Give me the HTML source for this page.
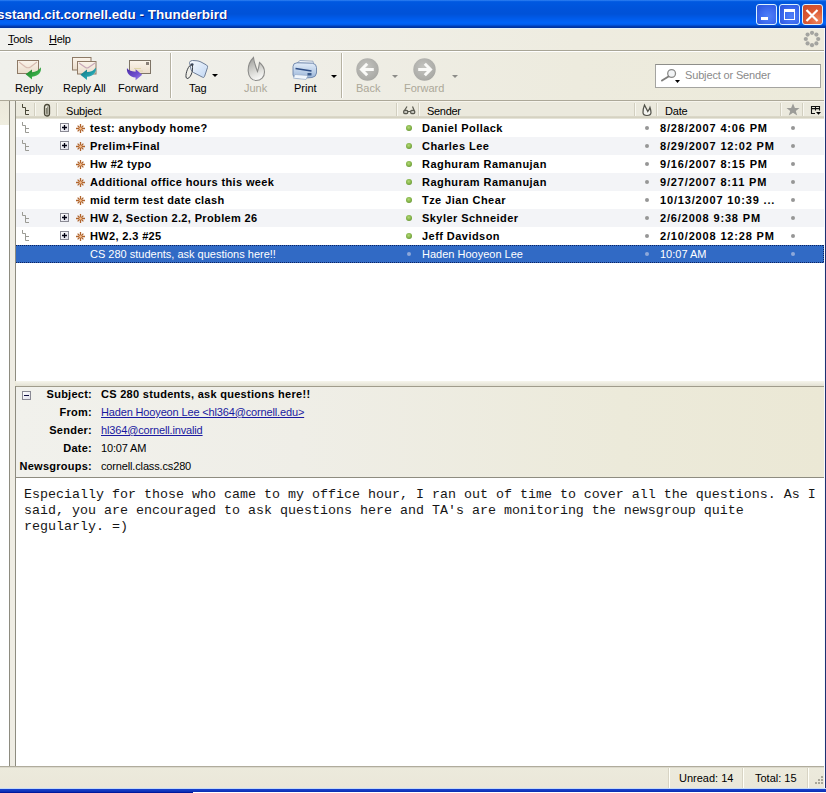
<!DOCTYPE html>
<html><head><meta charset="utf-8">
<style>
html,body{margin:0;padding:0;}
body{width:826px;height:793px;overflow:hidden;position:relative;background:#ECE9D8;font-family:"Liberation Sans",sans-serif;font-size:11px;color:#000;}
.a{position:absolute;}
.t{position:absolute;white-space:pre;line-height:13px;}
.b{font-weight:bold;}
/* title */
#title{left:0;top:0;width:826px;height:28px;background:linear-gradient(to bottom,#3D8BF5 0px,#0A62E6 1px,#0058E0 2px,#0053DA 9px,#0052D8 14px,#005CEC 19px,#0064F8 23px,#0059E6 25px,#0040B8 26px,#00309A 28px);}
#ttext{left:-3px;top:7px;font-size:13.5px;font-weight:bold;color:#fff;line-height:16px;text-shadow:1px 1px 0 #0A1E80;}
.wb{position:absolute;top:4px;width:19px;height:19px;border:1px solid #DCF2FF;border-radius:3px;}
#menubar{left:0;top:28px;width:824px;height:22px;background:linear-gradient(#E4F4FC 0,#E4F4FC 1px,transparent 1px),linear-gradient(to right,#F1F1EE 0%,#F0EFE8 35%,#EEECE0 70%,#EEEBDD 100%);}
#toolbar{left:0;top:52px;width:824px;height:48px;background:linear-gradient(to right,#F0F0EB 0%,#EFEEE7 35%,#EDEBDE 70%,#ECEADA 100%);}
.sep{position:absolute;width:1px;background:#B6B2A2;}
.hdrcol{position:absolute;top:101px;height:18px;}
.row{position:absolute;left:16px;width:808px;height:18px;}
.dot{position:absolute;width:4px;height:4px;border-radius:2px;background:#969696;}
.gdot{position:absolute;width:6px;height:6px;border-radius:3px;background:radial-gradient(circle at 45% 40%,#B4D878 0,#88B84C 45%,#4E7A26 100%);}
.star{position:absolute;}
.lbl{position:absolute;white-space:pre;line-height:13px;font-weight:bold;text-align:right;width:92px;left:0;letter-spacing:0.25px;}
.val{position:absolute;white-space:pre;line-height:13px;left:101px;letter-spacing:-0.15px;}
a,.lnk{color:#1A1AA0;text-decoration:underline;}
#body{left:16px;top:478px;width:808px;height:288px;background:#fff;}
#body pre{margin:0;position:absolute;left:8px;top:9px;font-family:"Liberation Mono",monospace;font-size:13.333px;line-height:16px;color:#161616;}
</style></head><body>

<!-- Title bar -->
<div id="title" class="a">
  <div id="ttext" class="t">sstand.cit.cornell.edu - Thunderbird</div>
  <div class="wb" style="left:756px;background:radial-gradient(circle at 60% 60%,#5080F8 0,#3E6CF0 45%,#2850D8 100%);"><div class="a" style="left:4px;top:12px;width:7px;height:3px;background:#fff;"></div></div>
  <div class="wb" style="left:779px;background:radial-gradient(circle at 60% 60%,#5080F8 0,#3E6CF0 45%,#2850D8 100%);"><div class="a" style="left:4px;top:4px;width:9px;height:7px;border:1px solid #fff;border-top-width:3px;"></div></div>
  <div class="wb" style="left:802px;background:radial-gradient(circle at 75% 80%,#F08860 0,#DC5A34 45%,#C8482A 100%);"><svg class="a" style="left:2px;top:4px" width="14" height="13"><path d="M1.5 1L12.5 12M12.5 1L1.5 12" stroke="#fff" stroke-width="2.2"/></svg></div>
</div>
<div class="a" style="left:824px;top:28px;width:1px;height:760px;background:#F6FAFF;"></div>
<div class="a" style="left:825px;top:28px;width:1px;height:765px;background:#1E3070;"></div>

<!-- Menu bar -->
<div id="menubar" class="a">
  <div class="t" style="left:8px;top:5px;letter-spacing:-0.25px;"><u>T</u>ools</div>
  <div class="t" style="left:49px;top:5px;letter-spacing:-0.25px;"><u>H</u>elp</div>
</div>
<div class="a" style="left:0;top:50px;width:824px;height:1px;background:#A8A596;"></div><div class="a" style="left:0;top:51px;width:824px;height:1px;background:#FFFFFF;"></div>

<!-- Toolbar -->
<div id="toolbar" class="a"></div>
<!-- Reply -->
<svg class="a" style="left:0;top:0" width="0" height="0"><defs>
  <linearGradient id="env" x1="0" y1="0" x2="0" y2="1"><stop offset="0" stop-color="#FBF4EA"/><stop offset="1" stop-color="#EADCCB"/></linearGradient>
  <linearGradient id="grn" x1="0" y1="0" x2="1" y2="1"><stop offset="0" stop-color="#1A7A28"/><stop offset="0.6" stop-color="#34A844"/><stop offset="1" stop-color="#7ADA7A"/></linearGradient>
  <linearGradient id="teal" x1="0" y1="0" x2="1" y2="1"><stop offset="0" stop-color="#0E6A78"/><stop offset="0.6" stop-color="#22A0AC"/><stop offset="1" stop-color="#78D8DC"/></linearGradient>
  <linearGradient id="purp" x1="0" y1="0" x2="1" y2="1"><stop offset="0" stop-color="#4A2CA8"/><stop offset="0.6" stop-color="#7050D0"/><stop offset="1" stop-color="#A890F0"/></linearGradient>
  <linearGradient id="tagg" x1="0" y1="0" x2="1" y2="1"><stop offset="0" stop-color="#F8FBFF"/><stop offset="1" stop-color="#C0D6F2"/></linearGradient>
  <linearGradient id="flm" x1="0.2" y1="0" x2="0.5" y2="1"><stop offset="0" stop-color="#9E9E9A"/><stop offset="0.55" stop-color="#D4D4D0"/><stop offset="1" stop-color="#FAFAF8"/></linearGradient>
  <linearGradient id="prn" x1="0" y1="0" x2="0" y2="1"><stop offset="0" stop-color="#E4EEFA"/><stop offset="1" stop-color="#98B4D8"/></linearGradient>
  <radialGradient id="circ" cx="0.45" cy="0.4" r="0.7"><stop offset="0" stop-color="#C4C4C0"/><stop offset="0.75" stop-color="#ACACA8"/><stop offset="1" stop-color="#A0A09C"/></radialGradient>
</defs></svg>
<svg class="a" style="left:14px;top:56px" width="32" height="26" viewBox="0 0 32 26">
  <rect x="3.5" y="4.5" width="21" height="13" fill="url(#env)" stroke="#8E7A66"/>
  <path d="M5 6L11.5 11Q14 12.5 16.5 11L23 6" fill="none" stroke="#D8BCB0" stroke-width="1.2"/>
  <path d="M11.6 18.2L18 13.6L18 16.2C22 16 25 14.5 26.7 11.3C27.8 15 25.5 20.3 18 20.8L18 23.6Z" fill="url(#grn)"/>
</svg>
<div class="t" style="left:15px;top:82px;">Reply</div>
<!-- Reply All -->
<svg class="a" style="left:68px;top:53px" width="32" height="29" viewBox="0 0 32 29">
  <rect x="4.5" y="4.5" width="18.5" height="12.5" fill="url(#env)" stroke="#8E7A66"/>
  <rect x="9.5" y="8.5" width="18.5" height="12.5" fill="url(#env)" stroke="#8E7A66"/>
  <path d="M11 10L17.5 14.5Q19 15.5 20.5 14.5L27 10" fill="none" stroke="#C8A8B8" stroke-width="1.2"/>
  <path d="M12.4 21.7L19 16.5L19 19C23 19 26 17.5 27.7 14.5C28.8 18.5 26 23.3 19 23.8L19 27Z" fill="url(#teal)"/>
</svg>
<div class="t" style="left:63px;top:82px;">Reply All</div>
<!-- Forward -->
<svg class="a" style="left:122px;top:55px" width="32" height="27" viewBox="0 0 32 27">
  <rect x="7.5" y="5.5" width="21" height="13" fill="url(#env)" stroke="#7E7466"/>
  <rect x="24" y="7" width="3" height="3" fill="#8A8078"/>
  <path d="M12 13.5H19M14 16H21" stroke="#E0D4A8" stroke-width="1"/>
  <path d="M20.2 19.8L13.6 14.3L13.6 16.8C9 16.5 6 15 5 13C4.2 17.5 7.5 22.2 13.6 22.5L13.6 25.2Z" fill="url(#purp)"/>
</svg>
<div class="t" style="left:118px;top:82px;">Forward</div>
<div class="sep" style="left:170px;top:53px;height:45px;"></div>
<div class="a" style="left:171px;top:53px;width:1px;height:45px;background:#FFFFFF;"></div>
<!-- Tag -->
<svg class="a" style="left:182px;top:56px" width="28" height="26" viewBox="0 0 28 26">
  <path d="M7.5 6.5Q8 4.5 10.5 4.5L15 4.8Q17 5 19 6L24.5 9Q26 10 25.5 11.5L22.5 20.5Q22 22 20.5 21.2L11.5 16.5Q10 15.5 9.2 14Z" fill="url(#tagg)" stroke="#6E7E98" stroke-width="1"/>
  <circle cx="10.2" cy="8.6" r="1.4" fill="#3E4E6A"/>
  <path d="M10.2 8.6C6.5 8.5 3.5 17 4 21C4.5 23.5 7 23 9 19C10.5 16 11 12 10.2 8.6" fill="none" stroke="#3A3E44" stroke-width="1"/>
</svg>
<svg class="a" style="left:212px;top:74px" width="6" height="4"><path d="M0 0H6L3 3Z" fill="#000"/></svg>
<div class="t" style="left:189px;top:82px;">Tag</div>
<!-- Junk -->
<svg class="a" style="left:242px;top:55px" width="28" height="28" viewBox="0 0 28 28">
  <path d="M11.5 2.5C7 7 6 12 6.2 16C6.5 22 10 25.5 14 25.5C19 25.5 22.5 22 22.5 17C22.5 13 20.5 10 17.5 7.5C17 11 16.5 14 15.5 16.5C14 12 12 8 11.5 2.5Z" fill="url(#flm)" stroke="#8C8C8A" stroke-width="1.1"/>
</svg>
<div class="t" style="left:244px;top:82px;color:#ACA899;">Junk</div>
<!-- Print -->
<svg class="a" style="left:288px;top:56px" width="34" height="28" viewBox="0 0 34 28">
  <path d="M9 7L12 4.5L25 5.2L25.5 7.5Z" fill="#F4F8FC" stroke="#8A9CB8" stroke-width="0.8"/>
  <path d="M5 10.5Q5 7 9 6.8L24.5 7.2Q28.5 8 28.5 11.5L28.5 17Q28 21 24 21.5L10 22.5Q5.5 22.5 5 19Z" fill="url(#prn)" stroke="#6A82A8" stroke-width="0.9"/>
  <path d="M7.5 12.5L23.5 15" stroke="#2E4E86" stroke-width="1.6"/>
  <path d="M7 18.5L20 19.5L18 23.5L5.5 22.2Z" fill="#F0F6FC" stroke="#9AAEC8" stroke-width="0.7"/>
  <rect x="19.5" y="17" width="4" height="2.5" fill="#3A5A8A"/>
</svg>
<svg class="a" style="left:331px;top:75px" width="6" height="4"><path d="M0 0H6L3 3Z" fill="#000"/></svg>
<div class="t" style="left:294px;top:82px;">Print</div>
<div class="sep" style="left:341px;top:53px;height:45px;"></div>
<div class="a" style="left:342px;top:53px;width:1px;height:45px;background:#FFFFFF;"></div>
<!-- Back -->
<svg class="a" style="left:355px;top:58px" width="25" height="24" viewBox="0 0 25 24">
  <circle cx="12.5" cy="11.5" r="11.2" fill="url(#circ)"/>
  <path d="M12.2 5.8L6.5 11.5L12.2 17.2M7 11.5H18.8" fill="none" stroke="#FAFAF8" stroke-width="3"/>
</svg>
<svg class="a" style="left:392px;top:75px" width="6" height="4"><path d="M0 0H6L3 3Z" fill="#8C8C88"/></svg>
<div class="t" style="left:356px;top:82px;color:#ACA899;">Back</div>
<!-- Forward nav -->
<svg class="a" style="left:412px;top:58px" width="25" height="24" viewBox="0 0 25 24">
  <circle cx="12.5" cy="11.5" r="11.2" fill="url(#circ)"/>
  <path d="M12.8 5.8L18.5 11.5L12.8 17.2M18 11.5H6.2" fill="none" stroke="#FAFAF8" stroke-width="3"/>
</svg>
<svg class="a" style="left:452px;top:75px" width="6" height="4"><path d="M0 0H6L3 3Z" fill="#8C8C88"/></svg>
<div class="t" style="left:404px;top:82px;color:#ACA899;">Forward</div>
<!-- Search -->
<div class="a" style="left:655px;top:64px;width:164px;height:22px;border:1px solid #A4A4A0;border-top-color:#8E8E8A;background:#fff;"></div>
<svg class="a" style="left:659px;top:68px" width="22" height="16" viewBox="0 0 22 16">
  <circle cx="12.6" cy="5.5" r="3.9" fill="#F2F4F6" stroke="#8A8A88" stroke-width="1.3"/>
  <path d="M9.5 8.5 L3 12.5" stroke="#7E7E7C" stroke-width="2" stroke-linecap="round"/>
  <path d="M16 12H21L18.5 15Z" fill="#000"/>
</svg>
<div class="t" style="left:685px;top:69px;color:#8A8A8A;letter-spacing:-0.15px;">Subject or Sender</div>
<!-- throbber -->
<svg class="a" style="left:803px;top:30px" width="18" height="18" viewBox="0 0 18 18">
  <g fill="#A4A4A0">
  <circle cx="9" cy="2.8" r="2.1"/><circle cx="13.4" cy="4.6" r="2.1"/><circle cx="15.2" cy="9" r="2.1"/><circle cx="13.4" cy="13.4" r="2.1"/>
  <circle cx="9" cy="15.2" r="2.1"/><circle cx="4.6" cy="13.4" r="2.1"/><circle cx="2.8" cy="9" r="2.1"/><circle cx="4.6" cy="4.6" r="2.1"/>
  </g>
</svg>
<div class="a" style="left:0;top:100px;width:824px;height:1px;background:#ACA898;"></div>

<!-- Left folder pane sliver -->
<div class="a" style="left:0;top:101px;width:9px;height:666px;background:#fff;"></div>
<div class="a" style="left:0;top:101px;width:9px;height:24px;background:linear-gradient(#EBE8DA,#F0EEE0);"></div>
<div class="a" style="left:9px;top:101px;width:1px;height:665px;background:#8E8C80;"></div>
<div class="a" style="left:10px;top:101px;width:5px;height:665px;background:#EFEDE4;"></div>
<div class="a" style="left:15px;top:101px;width:1px;height:280px;background:#8E8C80;"></div>

<!-- Thread pane -->
<div class="a" style="left:16px;top:101px;width:808px;height:280px;background:#fff;"></div>
<div class="a" style="left:16px;top:101px;width:808px;height:18px;background:linear-gradient(#F6F4EC 0,#F6F4EC 1px,#EBE9DD 1px,#EBE9DD 15px,#E0DDCE 15px,#D5D2C2 16px,#D5D2C2 17px,#E6E4D8 17px);"></div>

<!-- column header content -->
<svg class="a" style="left:21px;top:103px" width="10" height="13"><path d="M1.5 1V4.5H4.5V11.5H8M4.5 7.5H8" fill="none" stroke="#4A4838" stroke-width="1"/></svg>
<svg class="a" style="left:43px;top:103px" width="8" height="14"><path d="M1.5 4Q1.5 1.5 4 1.5Q6.5 1.5 6.5 4V10.5Q6.5 13 4 13Q1.5 13 1.5 10.5Z" fill="none" stroke="#4A4838" stroke-width="1.3"/><path d="M3.3 5V10.5Q3.3 11.3 4 11.3Q4.8 11.3 4.8 10.5V3.5" fill="none" stroke="#6A6858" stroke-width="1"/></svg>
<div class="t" style="left:66px;top:105px;letter-spacing:-0.2px;">Subject</div>
<svg class="a" style="left:402px;top:105px" width="14" height="10"><g fill="#E8E8E0" stroke="#5A5A50" stroke-width="1.3"><rect x="1.7" y="5.5" width="4" height="3" rx="1"/><rect x="8.7" y="5.5" width="4" height="3" rx="1"/></g><path d="M5.5 6.5H8.8M2.5 5.5L5 1.5M12.2 5.5L10.5 1.5" fill="none" stroke="#5A5A50" stroke-width="1.2"/></svg>
<div class="t" style="left:427px;top:105px;letter-spacing:-0.3px;">Sender</div>
<svg class="a" style="left:641px;top:103px" width="12" height="14"><path d="M3.5 2C2.5 4.5 2 7 2 9.5C2 11.5 3.5 12.5 6 12.5C8.5 12.5 10 11.5 10 9.5C10 7.5 9.5 6 9 4.5C8.5 6 7.5 7.5 6.8 8.5C6 6.5 4.5 4.5 3.5 2Z" fill="#F4F4F0" stroke="#505048" stroke-width="1.2"/></svg>
<div class="t" style="left:665px;top:105px;letter-spacing:-0.2px;">Date</div>
<svg class="a" style="left:786px;top:103px" width="14" height="13"><path d="M7 0.5L8.9 5H13.5L9.8 8L11.2 12.5L7 9.8L2.8 12.5L4.2 8L0.5 5H5.1Z" fill="#9C9C98"/></svg>
<svg class="a" style="left:810px;top:105px" width="12" height="11"><path d="M1.5 1.5H9.5M1.5 1V8.5H5M1.5 3.6H9.5M5.5 1.5V5.5M9.5 1V5.5" fill="none" stroke="#101010" stroke-width="1.1"/><path d="M6 7H11L8.5 9.8Z" fill="#000"/></svg>

<div class="a" style="left:34px;top:103px;width:1px;height:13px;background:#D2CFC0;"></div><div class="a" style="left:35px;top:103px;width:1px;height:13px;background:#F8F7F0;"></div>
<div class="a" style="left:56px;top:103px;width:1px;height:13px;background:#D2CFC0;"></div><div class="a" style="left:57px;top:103px;width:1px;height:13px;background:#F8F7F0;"></div>
<div class="a" style="left:396px;top:103px;width:1px;height:13px;background:#D2CFC0;"></div><div class="a" style="left:397px;top:103px;width:1px;height:13px;background:#F8F7F0;"></div>
<div class="a" style="left:418px;top:103px;width:1px;height:13px;background:#D2CFC0;"></div><div class="a" style="left:419px;top:103px;width:1px;height:13px;background:#F8F7F0;"></div>
<div class="a" style="left:634px;top:103px;width:1px;height:13px;background:#D2CFC0;"></div><div class="a" style="left:635px;top:103px;width:1px;height:13px;background:#F8F7F0;"></div>
<div class="a" style="left:656px;top:103px;width:1px;height:13px;background:#D2CFC0;"></div><div class="a" style="left:657px;top:103px;width:1px;height:13px;background:#F8F7F0;"></div>
<div class="a" style="left:780px;top:103px;width:1px;height:13px;background:#D2CFC0;"></div><div class="a" style="left:781px;top:103px;width:1px;height:13px;background:#F8F7F0;"></div>
<div class="a" style="left:802px;top:103px;width:1px;height:13px;background:#D2CFC0;"></div><div class="a" style="left:803px;top:103px;width:1px;height:13px;background:#F8F7F0;"></div>
<div class="row" style="top:119px;background:#FFFFFF;"></div>
<svg class="a" style="left:21px;top:122px" width="10" height="13"><path d="M1.5 0V3.5H4.5V10.5H8M4.5 6.5H8" fill="none" stroke="#9A9A94" stroke-width="1"/></svg>
<div class="a" style="left:60px;top:123px;width:7px;height:7px;border:1px solid #8A8A94;background:linear-gradient(135deg,#fff,#E0E0EA);"></div>
<svg class="a" style="left:61px;top:124px" width="8" height="8"><path d="M1 3.5H6M3.5 1V6" stroke="#000010" stroke-width="1.3"/></svg>
<svg class="a" style="left:75px;top:123px" width="11" height="11" viewBox="0 0 11 11"><g stroke="#B0642C" stroke-width="1.3"><path d="M5.5 1V10M1 5.5H10M2.6 2.6L8.4 8.4M8.4 2.6L2.6 8.4"/></g><circle cx="5.5" cy="5.5" r="1.3" fill="#F6C090"/></svg>
<div class="t b" style="letter-spacing:0.36px;left:90px;top:122px;">test: anybody home?</div>
<div class="gdot" style="left:406px;top:125px;"></div>
<div class="t b" style="letter-spacing:0.45px;left:422px;top:122px;">Daniel Pollack</div>
<div class="dot" style="left:645px;top:126px;"></div>
<div class="t b" style="letter-spacing:0.84px;left:660px;top:122px;">8/28/2007 4:06 PM</div>
<div class="dot" style="left:791px;top:126px;"></div>
<div class="row" style="top:137px;background:#F3F4F7;"></div>
<svg class="a" style="left:21px;top:140px" width="10" height="13"><path d="M1.5 0V3.5H4.5V10.5H8M4.5 6.5H8" fill="none" stroke="#9A9A94" stroke-width="1"/></svg>
<div class="a" style="left:60px;top:141px;width:7px;height:7px;border:1px solid #8A8A94;background:linear-gradient(135deg,#fff,#E0E0EA);"></div>
<svg class="a" style="left:61px;top:142px" width="8" height="8"><path d="M1 3.5H6M3.5 1V6" stroke="#000010" stroke-width="1.3"/></svg>
<svg class="a" style="left:75px;top:141px" width="11" height="11" viewBox="0 0 11 11"><g stroke="#B0642C" stroke-width="1.3"><path d="M5.5 1V10M1 5.5H10M2.6 2.6L8.4 8.4M8.4 2.6L2.6 8.4"/></g><circle cx="5.5" cy="5.5" r="1.3" fill="#F6C090"/></svg>
<div class="t b" style="letter-spacing:0.36px;left:90px;top:140px;">Prelim+Final</div>
<div class="gdot" style="left:406px;top:143px;"></div>
<div class="t b" style="letter-spacing:0.45px;left:422px;top:140px;">Charles Lee</div>
<div class="dot" style="left:645px;top:144px;"></div>
<div class="t b" style="letter-spacing:0.84px;left:660px;top:140px;">8/29/2007 12:02 PM</div>
<div class="dot" style="left:791px;top:144px;"></div>
<div class="row" style="top:155px;background:#FFFFFF;"></div>
<svg class="a" style="left:75px;top:159px" width="11" height="11" viewBox="0 0 11 11"><g stroke="#B0642C" stroke-width="1.3"><path d="M5.5 1V10M1 5.5H10M2.6 2.6L8.4 8.4M8.4 2.6L2.6 8.4"/></g><circle cx="5.5" cy="5.5" r="1.3" fill="#F6C090"/></svg>
<div class="t b" style="letter-spacing:0.36px;left:90px;top:158px;">Hw #2 typo</div>
<div class="gdot" style="left:406px;top:161px;"></div>
<div class="t b" style="letter-spacing:0.45px;left:422px;top:158px;">Raghuram Ramanujan</div>
<div class="dot" style="left:645px;top:162px;"></div>
<div class="t b" style="letter-spacing:0.84px;left:660px;top:158px;">9/16/2007 8:15 PM</div>
<div class="dot" style="left:791px;top:162px;"></div>
<div class="row" style="top:173px;background:#F3F4F7;"></div>
<svg class="a" style="left:75px;top:177px" width="11" height="11" viewBox="0 0 11 11"><g stroke="#B0642C" stroke-width="1.3"><path d="M5.5 1V10M1 5.5H10M2.6 2.6L8.4 8.4M8.4 2.6L2.6 8.4"/></g><circle cx="5.5" cy="5.5" r="1.3" fill="#F6C090"/></svg>
<div class="t b" style="letter-spacing:0.36px;left:90px;top:176px;">Additional office hours this week</div>
<div class="gdot" style="left:406px;top:179px;"></div>
<div class="t b" style="letter-spacing:0.45px;left:422px;top:176px;">Raghuram Ramanujan</div>
<div class="dot" style="left:645px;top:180px;"></div>
<div class="t b" style="letter-spacing:0.84px;left:660px;top:176px;">9/27/2007 8:11 PM</div>
<div class="dot" style="left:791px;top:180px;"></div>
<div class="row" style="top:191px;background:#FFFFFF;"></div>
<svg class="a" style="left:75px;top:195px" width="11" height="11" viewBox="0 0 11 11"><g stroke="#B0642C" stroke-width="1.3"><path d="M5.5 1V10M1 5.5H10M2.6 2.6L8.4 8.4M8.4 2.6L2.6 8.4"/></g><circle cx="5.5" cy="5.5" r="1.3" fill="#F6C090"/></svg>
<div class="t b" style="letter-spacing:0.36px;left:90px;top:194px;">mid term test date clash</div>
<div class="gdot" style="left:406px;top:197px;"></div>
<div class="t b" style="letter-spacing:0.45px;left:422px;top:194px;">Tze Jian Chear</div>
<div class="dot" style="left:645px;top:198px;"></div>
<div class="t b" style="letter-spacing:0.84px;left:660px;top:194px;">10/13/2007 10:39 ...</div>
<div class="dot" style="left:791px;top:198px;"></div>
<div class="row" style="top:209px;background:#F3F4F7;"></div>
<svg class="a" style="left:21px;top:212px" width="10" height="13"><path d="M1.5 0V3.5H4.5V10.5H8M4.5 6.5H8" fill="none" stroke="#9A9A94" stroke-width="1"/></svg>
<div class="a" style="left:60px;top:213px;width:7px;height:7px;border:1px solid #8A8A94;background:linear-gradient(135deg,#fff,#E0E0EA);"></div>
<svg class="a" style="left:61px;top:214px" width="8" height="8"><path d="M1 3.5H6M3.5 1V6" stroke="#000010" stroke-width="1.3"/></svg>
<svg class="a" style="left:75px;top:213px" width="11" height="11" viewBox="0 0 11 11"><g stroke="#B0642C" stroke-width="1.3"><path d="M5.5 1V10M1 5.5H10M2.6 2.6L8.4 8.4M8.4 2.6L2.6 8.4"/></g><circle cx="5.5" cy="5.5" r="1.3" fill="#F6C090"/></svg>
<div class="t b" style="letter-spacing:0.36px;left:90px;top:212px;">HW 2, Section 2.2, Problem 26</div>
<div class="gdot" style="left:406px;top:215px;"></div>
<div class="t b" style="letter-spacing:0.45px;left:422px;top:212px;">Skyler Schneider</div>
<div class="dot" style="left:645px;top:216px;"></div>
<div class="t b" style="letter-spacing:0.84px;left:660px;top:212px;">2/6/2008 9:38 PM</div>
<div class="dot" style="left:791px;top:216px;"></div>
<div class="row" style="top:227px;background:#FFFFFF;"></div>
<svg class="a" style="left:21px;top:230px" width="10" height="13"><path d="M1.5 0V3.5H4.5V10.5H8M4.5 6.5H8" fill="none" stroke="#9A9A94" stroke-width="1"/></svg>
<div class="a" style="left:60px;top:231px;width:7px;height:7px;border:1px solid #8A8A94;background:linear-gradient(135deg,#fff,#E0E0EA);"></div>
<svg class="a" style="left:61px;top:232px" width="8" height="8"><path d="M1 3.5H6M3.5 1V6" stroke="#000010" stroke-width="1.3"/></svg>
<svg class="a" style="left:75px;top:231px" width="11" height="11" viewBox="0 0 11 11"><g stroke="#B0642C" stroke-width="1.3"><path d="M5.5 1V10M1 5.5H10M2.6 2.6L8.4 8.4M8.4 2.6L2.6 8.4"/></g><circle cx="5.5" cy="5.5" r="1.3" fill="#F6C090"/></svg>
<div class="t b" style="letter-spacing:0.36px;left:90px;top:230px;">HW2, 2.3 #25</div>
<div class="gdot" style="left:406px;top:233px;"></div>
<div class="t b" style="letter-spacing:0.45px;left:422px;top:230px;">Jeff Davidson</div>
<div class="dot" style="left:645px;top:234px;"></div>
<div class="t b" style="letter-spacing:0.84px;left:660px;top:230px;">2/10/2008 12:28 PM</div>
<div class="dot" style="left:791px;top:234px;"></div>
<div class="row" style="top:245px;background:#316AC5;"></div>
<div class="a" style="left:16px;top:245px;width:808px;height:1px;background:repeating-linear-gradient(to right,#0C2460 0,#0C2460 1px,transparent 1px,transparent 2px);"></div>
<div class="a" style="left:16px;top:262px;width:808px;height:1px;background:repeating-linear-gradient(to right,#0C2460 0,#0C2460 1px,transparent 1px,transparent 2px);"></div>
<div class="a" style="left:823px;top:245px;width:1px;height:18px;background:repeating-linear-gradient(to bottom,#0C2460 0,#0C2460 1px,transparent 1px,transparent 2px);"></div>
<div class="t" style="left:90px;top:248px;color:#fff;">CS 280 students, ask questions here!!</div>
<div class="dot" style="left:407px;top:252px;background:#8EA8DA;"></div>
<div class="t" style="left:422px;top:248px;color:#fff;">Haden Hooyeon Lee</div>
<div class="dot" style="left:645px;top:252px;background:#8EA8DA;"></div>
<div class="t" style="left:660px;top:248px;color:#fff;">10:07 AM</div>
<div class="dot" style="left:791px;top:252px;background:#8EA8DA;"></div>

<!-- Splitter -->
<div class="a" style="left:16px;top:381px;width:808px;height:5px;background:linear-gradient(#F6F5EC,#E3E1D3);"></div>

<!-- Header pane -->
<div class="a" style="left:15px;top:386px;width:809px;height:1px;background:#A09C8C;"></div>
<div class="a" style="left:15px;top:386px;width:1px;height:380px;background:#8E8C80;"></div>
<div class="a" style="left:16px;top:387px;width:808px;height:90px;background:linear-gradient(to right,#F1F1EC 0%,#EFEEE7 35%,#ECEADA 75%,#EBE8D5 100%);"></div>
<div class="a" style="left:16px;top:477px;width:808px;height:1px;background:#8E8C80;"></div>

<!-- header pane content -->
<div class="a" style="left:22px;top:391px;width:7px;height:7px;border:1px solid #8A8A94;background:linear-gradient(135deg,#fff,#E0E0EA);"></div>
<div class="a" style="left:24px;top:395px;width:5px;height:1px;background:#101040;"></div>
<div class="lbl" style="top:388px;">Subject:</div><div class="val b" style="top:388px;letter-spacing:0.29px;">CS 280 students, ask questions here!!</div>
<div class="lbl" style="top:406px;">From:</div><div class="val lnk" style="top:406px;">Haden Hooyeon Lee &lt;hl364@cornell.edu&gt;</div>
<div class="lbl" style="top:424px;">Sender:</div><div class="val lnk" style="top:424px;">hl364@cornell.invalid</div>
<div class="lbl" style="top:442px;">Date:</div><div class="val" style="top:442px;">10:07 AM</div>
<div class="lbl" style="top:460px;">Newsgroups:</div><div class="val" style="top:460px;">cornell.class.cs280</div>

<!-- Body -->
<div id="body" class="a">
<pre>Especially for those who came to my office hour, I ran out of time to cover all the questions. As I
said, you are encouraged to ask questions here and TA's are monitoring the newsgroup quite
regularly. =)</pre>
</div>

<!-- Status bar -->
<div class="a" style="left:0;top:766px;width:824px;height:1px;background:#B0AC9C;"></div>
<div class="a" style="left:0;top:767px;width:824px;height:21px;background:linear-gradient(#DCD9CC 0,#DCD9CC 1px,#ECEADC 1px,#EAE7D9 100%);"></div>
<div class="a" style="left:668px;top:768px;width:1px;height:20px;background:#D8D4C4;"></div><div class="a" style="left:669px;top:768px;width:1px;height:20px;background:#FFFFF8;"></div>
<div class="a" style="left:742px;top:768px;width:1px;height:20px;background:#D8D4C4;"></div><div class="a" style="left:743px;top:768px;width:1px;height:20px;background:#FFFFF8;"></div>
<div class="a" style="left:807px;top:768px;width:1px;height:20px;background:#D8D4C4;"></div><div class="a" style="left:808px;top:768px;width:1px;height:20px;background:#FFFFF8;"></div>
<div class="t" style="left:679px;top:772px;">Unread: 14</div>
<div class="t" style="left:755px;top:772px;">Total: 15</div>
<svg class="a" style="left:810px;top:774px" width="14" height="14"><g fill="#A8A69A"><rect x="11" y="2" width="2" height="2"/><rect x="8" y="5" width="2" height="2"/><rect x="11" y="5" width="2" height="2"/><rect x="5" y="8" width="2" height="2"/><rect x="8" y="8" width="2" height="2"/><rect x="11" y="8" width="2" height="2"/></g></svg>
<div class="a" style="left:0;top:788px;width:826px;height:1px;background:#C4DAF8;"></div>
<div class="a" style="left:0;top:789px;width:826px;height:3px;background:linear-gradient(#1A44D0,#0A2CB0);"></div>
<div class="a" style="left:0;top:792px;width:193px;height:1px;background:#00189C;"></div>
<div class="a" style="left:193px;top:792px;width:633px;height:1px;background:#FFFFFF;"></div>

</body></html>
